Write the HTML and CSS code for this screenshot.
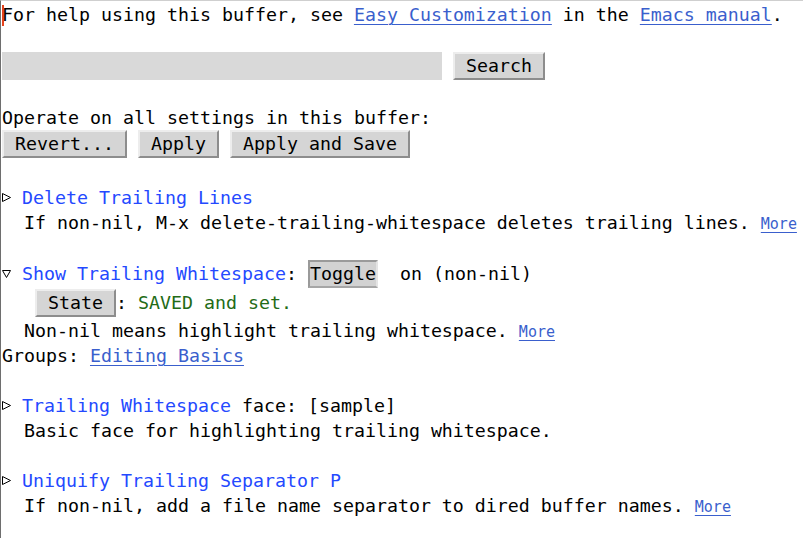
FILE: index.html
```html
<!DOCTYPE html>
<html>
<head>
<meta charset="utf-8">
<link rel="stylesheet" href="styles.css">
</head>
<body>
<div class="frame">
  <span class="cursor"></span>
  <div class="buffer">
    <div class="line">For help using this buffer, see <a class="link">Easy Customization</a> in the <a class="link">Emacs manual</a>.</div>
    <div class="line"></div>
    <div class="line tall"><span class="field"></span> <span class="btn"> Search </span></div>
    <div class="line"></div>
    <div class="line">Operate on all settings in this buffer:</div>
    <div class="line tall"><span class="btn"> Revert... </span> <span class="btn"> Apply </span> <span class="btn"> Apply and Save </span></div>
    <div class="line gap"></div>
    <div class="line"><span class="tri"><svg width="10" height="11" viewBox="0 0 10 11"><path d="M0.5 1.5 L8.5 5.5 L0.5 9.5 Z" fill="none" stroke="#000" stroke-width="1"/></svg></span> <span class="tag">Delete Trailing Lines</span></div>
    <div class="line">  If non-nil, M-x delete-trailing-whitespace deletes trailing lines. <a class="more">More</a></div>
    <div class="line"></div>
    <div class="line tall"><span class="tri"><svg width="10" height="11" viewBox="0 0 10 11"><path d="M0.5 2.5 L8.5 2.5 L4.5 9.5 Z" fill="none" stroke="#000" stroke-width="1"/></svg></span> <span class="tag">Show Trailing Whitespace</span>: <span class="btn toggle">Toggle</span>  on (non-nil)</div>
    <div class="line state">   <span class="btn"> State </span>: <span class="saved">SAVED and set.</span></div>
    <div class="line">  Non-nil means highlight trailing whitespace. <a class="more">More</a></div>
    <div class="line">Groups: <a class="link">Editing Basics</a></div>
    <div class="line"></div>
    <div class="line"><span class="tri"><svg width="10" height="11" viewBox="0 0 10 11"><path d="M0.5 1.5 L8.5 5.5 L0.5 9.5 Z" fill="none" stroke="#000" stroke-width="1"/></svg></span> <span class="tag">Trailing Whitespace</span> face: [sample]</div>
    <div class="line">  Basic face for highlighting trailing whitespace.</div>
    <div class="line"></div>
    <div class="line"><span class="tri"><svg width="10" height="11" viewBox="0 0 10 11"><path d="M0.5 1.5 L8.5 5.5 L0.5 9.5 Z" fill="none" stroke="#000" stroke-width="1"/></svg></span> <span class="tag">Uniquify Trailing Separator P</span></div>
    <div class="line">  If non-nil, add a file name separator to dired buffer names. <a class="more">More</a></div>
  </div>
</div>
</body>
</html>
```

FILE: styles.css
```css
html, body {
  margin: 0;
  padding: 0;
  background: #ffffff;
}

.frame {
  position: relative;
  width: 803px;
  height: 538px;
  box-sizing: border-box;
  border-left: 1px solid #6e6e6e;
  border-top: 1px solid #cfcfcf;
  overflow: hidden;
}

.cursor {
  position: absolute;
  left: 1px;
  top: 4px;
  width: 2px;
  height: 21px;
  background: #e5431d;
}

.buffer {
  padding: 1px 0 0 1px;
  font-family: "DejaVu Sans Mono", "Liberation Mono", monospace;
  font-size: 18.27px;
  color: #000;
}

.line {
  display: block;
  height: 25px;
  line-height: 25px;
  white-space: pre;
}

.line.tall {
  height: 28px;
  line-height: 28px;
}

.line.state {
  height: 30px;
  line-height: 30px;
}

.line.gap {
  height: 27px;
}

.link {
  color: #3a5fcd;
  text-decoration: underline;
  text-underline-offset: 3px;
  text-decoration-thickness: 1px;
}

.more {
  color: #3a5fcd;
  font-size: 15px;
  text-decoration: underline;
  text-underline-offset: 3px;
  text-decoration-thickness: 1px;
}

.tag {
  color: #2449ff;
}

.saved {
  color: #236b16;
}

.field {
  display: inline-block;
  vertical-align: top;
  width: 440px;
  height: 28px;
  background: #d9d9d9;
}

.btn {
  display: inline-block;
  vertical-align: top;
  box-sizing: border-box;
  height: 28px;
  line-height: 24px;
  background: #d5d5d5;
  border: 2px solid;
  border-color: #ededed #8d8d8d #8d8d8d #ededed;
}

.line.state .btn {
  vertical-align: middle;
  margin-top: -3px;
}

.btn.toggle {
  background: #d2d2d2;
  border-color: #9a9a9a #e4e4e4 #a6a6a6 #9a9a9a;
}

.tri {
  display: inline-block;
  width: 9px;
  vertical-align: middle;
  line-height: 0;
  margin-top: -3px;
}

.tri svg {
  display: inline-block;
}
```
